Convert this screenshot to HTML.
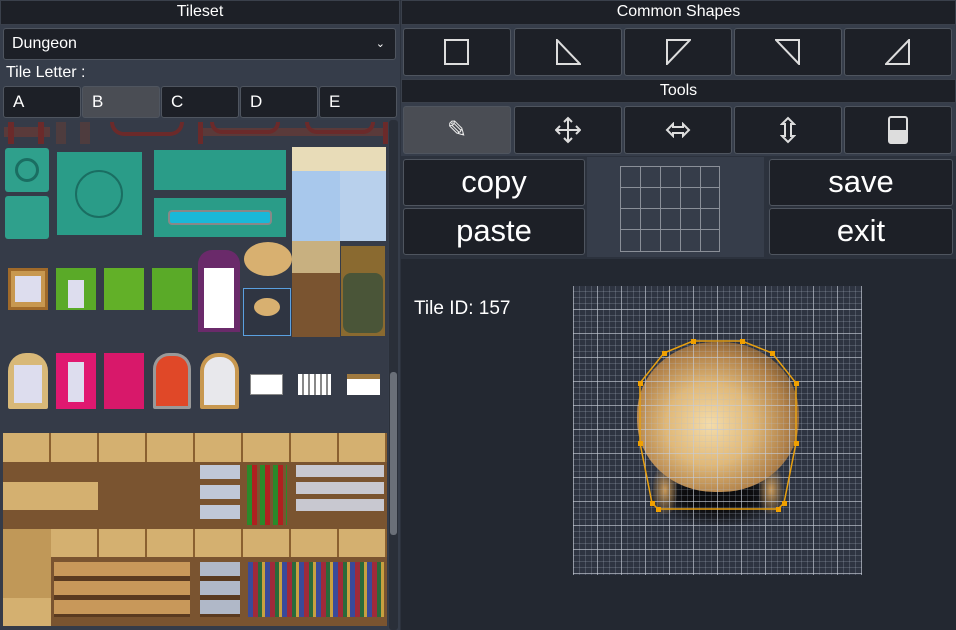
<!DOCTYPE html>
<html><head><meta charset="utf-8"><style>
*{box-sizing:border-box;margin:0;padding:0}
body{width:956px;height:630px;background:#2c323d;font-family:"Liberation Sans",sans-serif;color:#fff;position:relative;overflow:hidden}
.a{position:absolute}
.hdr{background:#1d2027;border:1px solid #3a404b;text-align:center;font-size:16px;line-height:22px}
.btn{position:absolute;background:#1d2027;border:1px solid #4f555f;border-radius:3px}
.sel{background:#4a4d54}
.lt{font-size:17px;line-height:30px;padding-left:9px}
.big{font-size:31px;text-align:center;line-height:44px}
.ic{position:absolute;left:50%;top:50%;transform:translate(-50%,-50%)}
</style></head><body>
<div class="a" style="left:0;top:0;width:400px;height:630px;background:#363d4a"></div>
<div class="a hdr" style="left:0;top:0;width:400px;height:25px">Tileset</div>
<div class="btn" style="left:3px;top:28px;width:393px;height:32px;font-size:16px;line-height:30px;padding-left:8px">Dungeon<span style="position:absolute;right:10px;top:0;font-size:11px">&#8964;</span></div>
<div class="a" style="left:6px;top:63px;font-size:16px;line-height:20px">Tile Letter :</div>
<div class="btn lt" style="left:3px;top:86px;width:78px;height:32px">A</div>
<div class="btn lt sel" style="left:82px;top:86px;width:78px;height:32px">B</div>
<div class="btn lt" style="left:161px;top:86px;width:78px;height:32px">C</div>
<div class="btn lt" style="left:240px;top:86px;width:78px;height:32px">D</div>
<div class="btn lt" style="left:319px;top:86px;width:78px;height:32px">E</div>
<div class="a" style="left:0;top:120px;width:388px;height:510px;background:#353b48"></div>
<div class="a" style="left:389px;top:120px;width:9px;height:510px;background:#2a2f39;border-radius:3px"></div>
<div class="a" style="left:390px;top:372px;width:7px;height:163px;background:#6a6f78;border-radius:3px"></div>
<div class="a" style="left:4px;top:127px;width:46px;height:10px;background:#5a3a3a"></div>
<div class="a" style="left:8px;top:122px;width:6px;height:22px;background:#6b2a2a"></div>
<div class="a" style="left:38px;top:122px;width:6px;height:22px;background:#6b2a2a"></div>
<div class="a" style="left:56px;top:122px;width:10px;height:22px;background:#4e3c3e"></div>
<div class="a" style="left:80px;top:122px;width:10px;height:22px;background:#4e3c3e"></div>
<div class="a" style="left:110px;top:122px;width:74px;height:14px;border:4px solid #6b2a2a;border-top:none;border-radius:0 0 30px 30px"></div>
<div class="a" style="left:198px;top:128px;width:190px;height:8px;background:#5a3a3a"></div>
<div class="a" style="left:198px;top:122px;width:190px;height:22px;border-left:5px solid #6b2a2a;border-right:5px solid #6b2a2a"></div>
<div class="a" style="left:210px;top:122px;width:70px;height:12px;border:4px solid #6b2a2a;border-top:none;border-radius:0 0 30px 30px"></div>
<div class="a" style="left:305px;top:122px;width:70px;height:12px;border:4px solid #6b2a2a;border-top:none;border-radius:0 0 30px 30px"></div>
<div class="a" style="left:5px;top:148px;width:44px;height:44px;background:#2fa08c;border-radius:3px"></div>
<div class="a" style="left:15px;top:158px;width:24px;height:24px;border-radius:50%;border:3px solid #1a6e62"></div>
<div class="a" style="left:5px;top:196px;width:44px;height:43px;background:#2fa08c;border-radius:3px"></div>
<div class="a" style="left:57px;top:152px;width:85px;height:83px;background:#2a9c88"></div>
<div class="a" style="left:75px;top:170px;width:48px;height:48px;border:2px solid #1a6e62;border-radius:50%"></div>
<div class="a" style="left:154px;top:150px;width:132px;height:40px;background:#2a9c88"></div>
<div class="a" style="left:154px;top:198px;width:132px;height:39px;background:#2a9c88"></div>
<div class="a" style="left:168px;top:210px;width:104px;height:15px;background:#1ab8d8;border:2px solid #888;border-radius:4px"></div>
<div class="a" style="left:292px;top:147px;width:48px;height:94px;background:#a8c8ec"></div>
<div class="a" style="left:292px;top:147px;width:48px;height:24px;background:#e8dcb8"></div>
<div class="a" style="left:340px;top:147px;width:46px;height:94px;background:#b8d0ec"></div>
<div class="a" style="left:340px;top:147px;width:46px;height:24px;background:#e8dcb8"></div>
<div class="a" style="left:292px;top:241px;width:48px;height:96px;background:#7a5430"></div>
<div class="a" style="left:292px;top:241px;width:48px;height:32px;background:#c8b080"></div>
<div class="a" style="left:341px;top:246px;width:44px;height:90px;background:#8a6a30"></div>
<div class="a" style="left:343px;top:273px;width:40px;height:60px;background:#4a5538;border-radius:8px"></div>
<div class="a" style="left:8px;top:268px;width:40px;height:42px;background:#c89850;border:3px solid #a06a2a"></div>
<div class="a" style="left:15px;top:276px;width:26px;height:26px;background:#dde"></div>
<div class="a" style="left:56px;top:268px;width:40px;height:42px;background:#5aaa28"></div>
<div class="a" style="left:68px;top:280px;width:16px;height:28px;background:#dde"></div>
<div class="a" style="left:104px;top:268px;width:40px;height:42px;background:#62b028"></div>
<div class="a" style="left:152px;top:268px;width:40px;height:42px;background:#5aaa28"></div>
<div class="a" style="left:198px;top:250px;width:42px;height:82px;background:#6a2a6a;border-radius:14px 14px 0 0"></div>
<div class="a" style="left:204px;top:268px;width:30px;height:60px;background:#fff"></div>
<div class="a" style="left:244px;top:242px;width:48px;height:34px;background:#d8b070;border-radius:50%"></div>
<div class="a" style="left:243px;top:288px;width:48px;height:48px;border:1px solid #5aa0e0;background:#2f3542"></div>
<div class="a" style="left:254px;top:298px;width:26px;height:18px;background:#d8b070;border-radius:50%"></div>
<div class="a" style="left:8px;top:353px;width:40px;height:56px;background:#d8b878;border-radius:18px 18px 2px 2px"></div>
<div class="a" style="left:14px;top:365px;width:28px;height:38px;background:#dde"></div>
<div class="a" style="left:56px;top:353px;width:40px;height:56px;background:#e01870"></div>
<div class="a" style="left:68px;top:362px;width:16px;height:40px;background:#dde"></div>
<div class="a" style="left:104px;top:353px;width:40px;height:56px;background:#d8186a"></div>
<div class="a" style="left:153px;top:353px;width:38px;height:56px;background:#e04828;border:3px solid #999;border-radius:16px 16px 2px 2px"></div>
<div class="a" style="left:200px;top:353px;width:39px;height:56px;background:#e8e8ec;border:4px solid #c89850;border-radius:18px 18px 2px 2px"></div>
<div class="a" style="left:250px;top:374px;width:33px;height:21px;background:#fff;border:1px solid #888"></div>
<div class="a" style="left:298px;top:374px;width:33px;height:21px;background:repeating-linear-gradient(90deg,#fff 0 4px,#888 4px 6px)"></div>
<div class="a" style="left:347px;top:374px;width:33px;height:21px;background:#fff;border-top:5px solid #a07a40"></div>
<div class="a" style="left:3px;top:433px;width:384px;height:193px;background:#7a5430"></div>
<div class="a" style="left:3px;top:433px;width:384px;height:29px;background:repeating-linear-gradient(90deg,#d4b070 0 46px,#8a6030 46px 48px)"></div>
<div class="a" style="left:3px;top:482px;width:95px;height:28px;background:#d4b070"></div>
<div class="a" style="left:3px;top:529px;width:48px;height:70px;background:#c09858"></div>
<div class="a" style="left:51px;top:529px;width:336px;height:28px;background:repeating-linear-gradient(90deg,#d4b070 0 46px,#8a6030 46px 48px)"></div>
<div class="a" style="left:3px;top:598px;width:48px;height:28px;background:#d4b070"></div>
<div class="a" style="left:200px;top:465px;width:40px;height:60px;background:repeating-linear-gradient(180deg,#c0c8d8 0 14px,#7a5430 14px 20px)"></div>
<div class="a" style="left:247px;top:465px;width:40px;height:60px;background:repeating-linear-gradient(90deg,#2a8a2a 0 5px,#b02020 5px 10px,#7a5430 10px 13px)"></div>
<div class="a" style="left:296px;top:465px;width:88px;height:50px;background:repeating-linear-gradient(180deg,#c8c8d0 0 12px,#7a5430 12px 17px)"></div>
<div class="a" style="left:54px;top:562px;width:136px;height:55px;background:repeating-linear-gradient(180deg,#c8985a 0 14px,#5a3a20 14px 19px)"></div>
<div class="a" style="left:200px;top:562px;width:40px;height:55px;background:repeating-linear-gradient(180deg,#b0b8c8 0 14px,#5a3a20 14px 19px)"></div>
<div class="a" style="left:248px;top:562px;width:136px;height:55px;background:repeating-linear-gradient(90deg,#3a4a9a 0 5px,#a02a3a 5px 10px,#2a6a3a 10px 14px,#c8a040 14px 17px)"></div>
<div class="a" style="left:401px;top:0;width:555px;height:258px;background:#363d4a"></div>
<div class="a hdr" style="left:401px;top:0;width:555px;height:25px">Common Shapes</div>
<div class="btn" style="left:403px;top:28px;width:108px;height:48px"><svg class="ic" width="26" height="26" viewBox="0 0 26 26"><rect x="1" y="1" width="23" height="24" fill="none" stroke="#ddd" stroke-width="2"/></svg></div>
<div class="btn" style="left:514px;top:28px;width:108px;height:48px"><svg class="ic" width="26" height="26" viewBox="0 0 26 26"><path d="M2 1V25H25Z" fill="none" stroke="#ddd" stroke-width="2"/></svg></div>
<div class="btn" style="left:624px;top:28px;width:108px;height:48px"><svg class="ic" width="26" height="26" viewBox="0 0 26 26"><path d="M2 25V1H25Z" fill="none" stroke="#ddd" stroke-width="2"/></svg></div>
<div class="btn" style="left:734px;top:28px;width:108px;height:48px"><svg class="ic" width="26" height="26" viewBox="0 0 26 26"><path d="M1 1H24V25Z" fill="none" stroke="#ddd" stroke-width="2"/></svg></div>
<div class="btn" style="left:844px;top:28px;width:108px;height:48px"><svg class="ic" width="26" height="26" viewBox="0 0 26 26"><path d="M1 25H24V1Z" fill="none" stroke="#ddd" stroke-width="2"/></svg></div>
<div class="a hdr" style="left:401px;top:79px;width:555px;height:24px">Tools</div>
<div class="btn sel" style="left:403px;top:106px;width:108px;height:48px"><span class="ic" style="font-size:24px;color:#eee">&#9998;</span></div>
<div class="btn" style="left:514px;top:106px;width:108px;height:48px"><svg class="ic" width="26" height="28" viewBox="0 0 26 28"><path d="M13 2V26M1 14H25M9 6L13 2L17 6M9 22L13 26L17 22M5 10L1 14L5 18M21 10L25 14L21 18" fill="none" stroke="#ddd" stroke-width="2"/></svg></div>
<div class="btn" style="left:624px;top:106px;width:108px;height:48px"><svg class="ic" width="26" height="16" viewBox="0 0 26 16"><path d="M8 2L2 8L8 14V11H18V14L24 8L18 2V5H8Z" fill="none" stroke="#ddd" stroke-width="2"/></svg></div>
<div class="btn" style="left:734px;top:106px;width:108px;height:48px"><svg class="ic" width="16" height="28" viewBox="0 0 16 28"><path d="M2 8L8 2L14 8H11V20H14L8 26L2 20H5V8Z" fill="none" stroke="#ddd" stroke-width="2"/></svg></div>
<div class="btn" style="left:844px;top:106px;width:108px;height:48px"><svg class="ic" width="20" height="28" viewBox="0 0 20 28"><rect x="1" y="1" width="18" height="26" rx="2" fill="none" stroke="#ddd" stroke-width="2"/><rect x="1" y="14" width="18" height="13" fill="#ddd"/></svg></div>
<div class="a" style="left:401px;top:156px;width:555px;height:102px;background:#2c323d"></div>
<div class="a" style="left:587px;top:157px;width:177px;height:100px;background:#363d4a"></div>
<div class="btn big" style="left:403px;top:159px;width:182px;height:47px">copy</div>
<div class="btn big" style="left:403px;top:208px;width:182px;height:47px">paste</div>
<div class="btn big" style="left:769px;top:159px;width:184px;height:47px">save</div>
<div class="btn big" style="left:769px;top:208px;width:184px;height:47px">exit</div>
<svg class="a" style="left:620px;top:166px" width="101" height="87"><g stroke="#8a8f98" stroke-width="1" fill="none"><rect x="0.5" y="0.5" width="99" height="85"/><path d="M20.5 0V86M40.5 0V86M60.5 0V86M80.5 0V86M0 21.5H100M0 42.5H100M0 63.5H100"/></g></svg>
<div class="a" style="left:401px;top:259px;width:555px;height:371px;background:#232831"></div>
<div class="a" style="left:414px;top:297px;font-size:19px;line-height:24px">Tile ID: 157</div>
<div class="a" style="left:573px;top:286px;width:289px;height:289px;background:#2e3441;overflow:hidden">
<div class="a" style="left:75px;top:180px;width:140px;height:60px;border-radius:40%;background:radial-gradient(ellipse,#0c0c0e 35%,rgba(20,20,20,0) 75%)"></div>
<div class="a" style="left:80px;top:180px;width:24px;height:48px;border-radius:40%;background:radial-gradient(ellipse,#c89858,rgba(100,70,30,0) 80%)"></div>
<div class="a" style="left:186px;top:180px;width:24px;height:48px;border-radius:40%;background:radial-gradient(ellipse,#c89858,rgba(100,70,30,0) 80%)"></div>
<div class="a" style="left:64px;top:56px;width:162px;height:150px;border-radius:48%;background:radial-gradient(ellipse at 45% 55%,#f4dcaa 0,#e0b878 35%,#b08048 62%,#6a4a28 82%,rgba(40,30,20,0) 100%)"></div>
<div class="a" style="left:0;top:0;width:289px;height:289px;background-image:linear-gradient(90deg,rgba(180,190,205,.22) 1px,transparent 1px),linear-gradient(0deg,rgba(180,190,205,.22) 1px,transparent 1px);background-size:6px 6px"></div>
<div class="a" style="left:0;top:0;width:289px;height:289px;background-image:linear-gradient(90deg,rgba(200,205,215,.55) 1px,transparent 1px),linear-gradient(0deg,rgba(200,205,215,.55) 1px,transparent 1px);background-size:24px 24px"></div>
</div>
<svg class="a" style="left:0;top:0" width="956" height="630"><polygon points="693,341 742,341 772,353 796,383 796,443 784,503 778,509 658,509 652,503 640,443 640,383 664,353" fill="none" stroke="#e8a010" stroke-width="1.5"/><g fill="#f0a000">
<rect x="691" y="339" width="5" height="5"/><rect x="740" y="339" width="5" height="5"/><rect x="770" y="351" width="5" height="5"/><rect x="794" y="381" width="5" height="5"/><rect x="794" y="441" width="5" height="5"/><rect x="782" y="501" width="5" height="5"/><rect x="776" y="507" width="5" height="5"/><rect x="656" y="507" width="5" height="5"/><rect x="650" y="501" width="5" height="5"/><rect x="638" y="441" width="5" height="5"/><rect x="638" y="381" width="5" height="5"/><rect x="662" y="351" width="5" height="5"/></g></svg>
</body></html>
